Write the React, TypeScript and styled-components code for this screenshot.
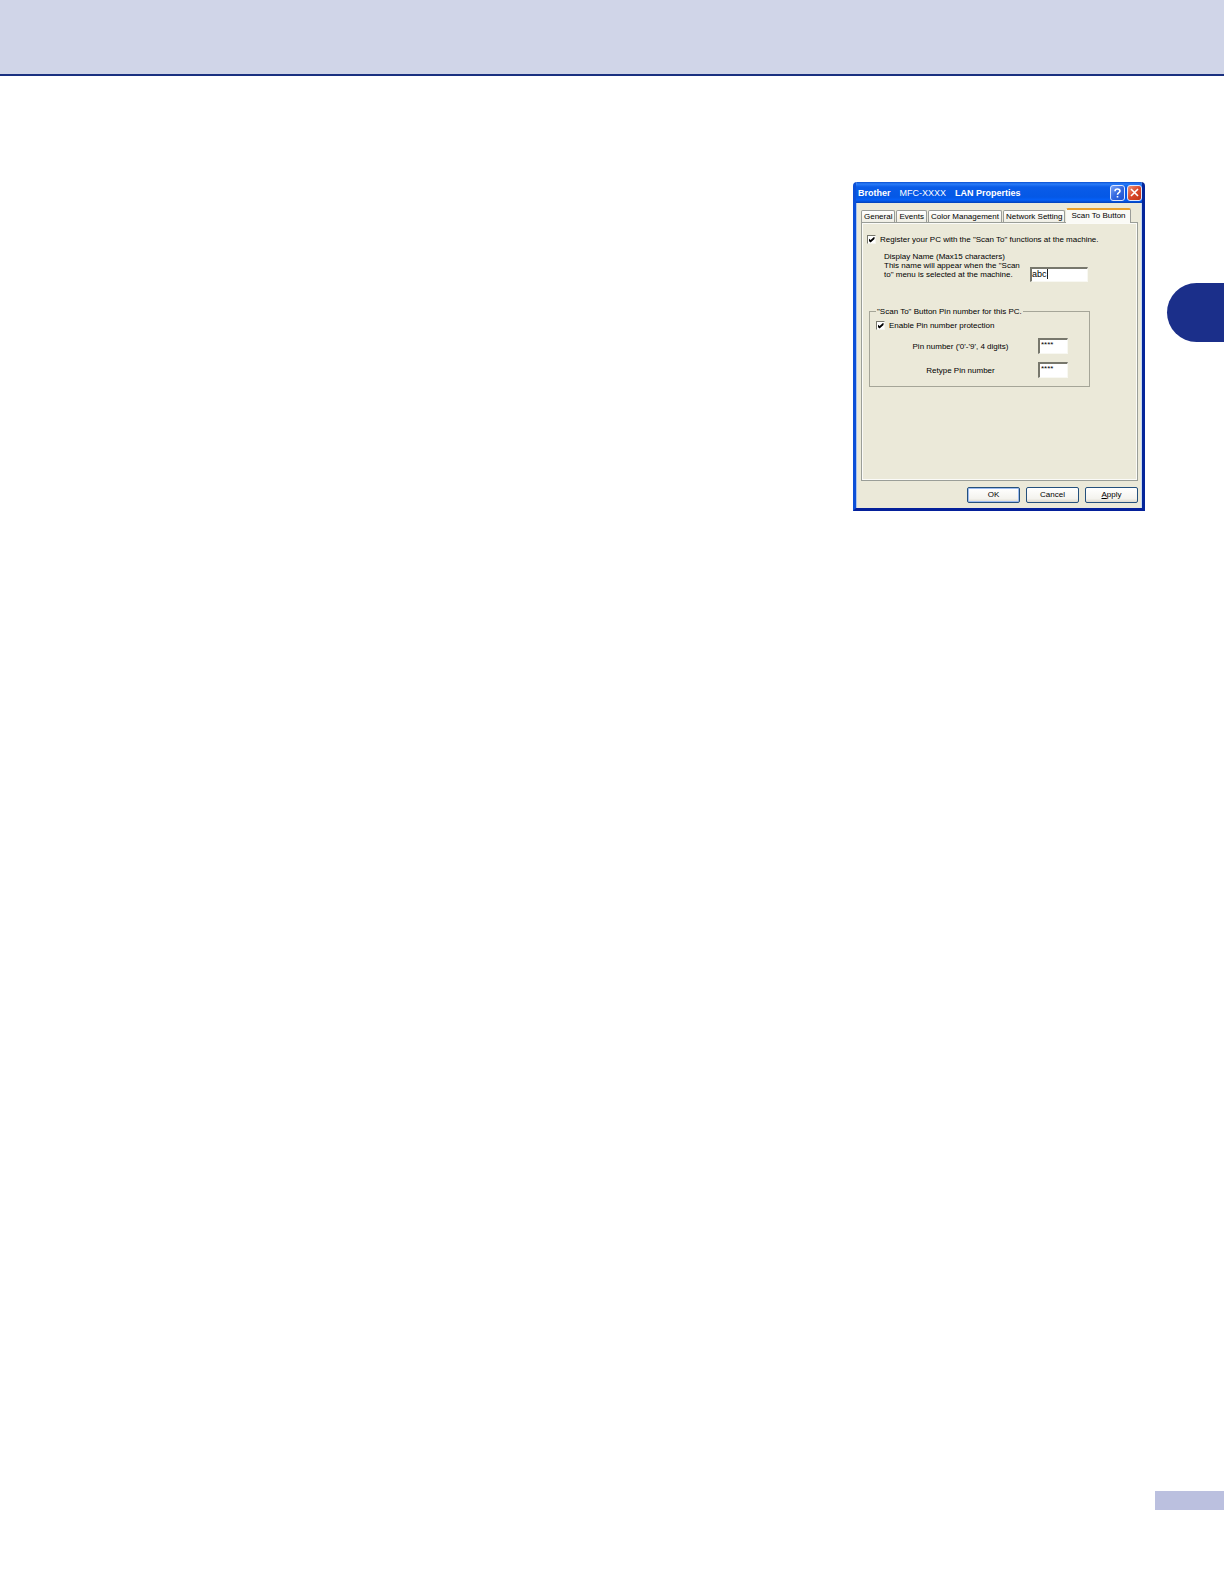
import React from "react";
import styled, { createGlobalStyle } from "styled-components";

const GlobalStyle = createGlobalStyle`
  *, *::before, *::after { box-sizing: border-box; }
  body { margin: 0; background: #fff; }
  button, input { font: inherit; color: inherit; margin: 0; }
`;

const Page = styled.div`
  display: flex;
  flex-direction: column;
  min-height: 100vh;
  font-family: "Liberation Sans", Arial, sans-serif;
`;

const Banner = styled.header`
  height: 76px;
  flex: none;
  background: #d0d5e8;
  border-bottom: 2px solid #1a3080;
`;

const Main = styled.main`
  flex: 1;
  display: flex;
  justify-content: flex-end;
  align-items: flex-start;
  gap: 22px;
  padding-top: 106px;
`;

const ChapterTab = styled.aside`
  width: 57px;
  height: 59px;
  margin-top: 101px;
  border-radius: 30px 0 0 30px;
  background: #1b2f8a;
`;

const PageMarker = styled.footer`
  align-self: flex-end;
  width: 69px;
  height: 19px;
  margin-bottom: 74px;
  background: #bbc0df;
`;

const Dialog = styled.section`
  width: 292px;
  border: solid;
  border-width: 0 3px 3px;
  border-color: #0831a8 #04269a #04209a #0c50d8;
  border-radius: 4px 4px 0 0;
  background: #ebe9d9;
  color: #000;
  font-size: 8px;
  line-height: 9px;
  overflow: hidden;
`;

const TitleBar = styled.header`
  display: flex;
  align-items: center;
  gap: 2px;
  height: 21px;
  margin: 0 -3px;
  padding: 0 3px 0 5px;
  background: linear-gradient(#0a50d0 0, #2a7cf8 2px, #0a5ce8 5px, #0458e6 15px, #0560f8 18px, #0340b8 21px);
  color: #fff;
`;

const Title = styled.h1`
  flex: 1;
  display: flex;
  gap: 9px;
  margin: 0;
  font-size: 9px;
  line-height: 12px;
  font-weight: bold;
  white-space: nowrap;
`;

const Model = styled.span`
  font-weight: normal;
`;

const CaptionButton = styled.button<{ $close?: boolean }>`
  display: grid;
  place-items: center;
  width: 15px;
  height: 16px;
  padding: 0;
  border: 1px solid #dfe8ff;
  border-radius: 3px;
  background: ${(p) =>
    p.$close
      ? "linear-gradient(135deg, #ee9478, #d9472a 50%, #c03414)"
      : "linear-gradient(135deg, #7aa4f8, #3468e0 50%, #1c50d0)"};
`;

const Body = styled.div`
  padding: 5px 4px 5px 5px;
  box-shadow: inset 1px 0 #a9c4ee, inset -1px 0 #c5daf2;
`;

const Tabs = styled.div`
  display: flex;
  align-items: flex-end;
  gap: 1px;
  height: 14px;
`;

const Tab = styled.button<{ $active?: boolean }>`
  height: ${(p) => (p.$active ? 15 : 12)}px;
  margin-bottom: ${(p) => (p.$active ? -1 : 0)}px;
  padding: ${(p) => (p.$active ? "0 4px 2px" : "0 2px")};
  border: 1px solid #9a9c98;
  border-top-color: ${(p) => (p.$active ? "#e8a02c" : "#9a9c98")};
  border-top-width: ${(p) => (p.$active ? 2 : 1)}px;
  border-bottom: 0;
  border-left-color: ${(p) => (p.$active ? "#f8f8f4" : "#9a9c98")};
  border-radius: 2px 2px 0 0;
  background: ${(p) => (p.$active ? "#fafaf6" : "linear-gradient(#fff, #efeee4)")};
  position: relative;
  line-height: 10px;
  white-space: nowrap;
`;

const Panel = styled.div`
  min-height: 259px;
  padding: 12px 6px 12px 5px;
  border: 1px solid #9a9e98;
  box-shadow: inset 1px 1px #fbfbf8, inset -1px -1px #fbfbf8;
`;

const CheckRow = styled.label`
  display: flex;
  align-items: center;
  gap: 4px;
  height: 9px;
  white-space: nowrap;
`;

const CheckBox = styled.input.attrs({ type: "checkbox" })`
  appearance: none;
  width: 9px;
  height: 9px;
  flex: none;
  border: 1px solid;
  border-color: #77776c #f5f5ee #f5f5ee #77776c;
  background: #fff;
  display: grid;
  place-items: center;
  &:checked::before {
    content: "";
    width: 6px;
    height: 6px;
    background: #000;
    clip-path: polygon(0 30%, 35% 60%, 100% 0, 100% 40%, 35% 100%, 0 70%);
  }
`;

const NameRow = styled.div`
  display: flex;
  align-items: flex-end;
  height: 30px;
  margin-top: 8px;
  padding-left: 17px;
`;

const NameLabel = styled.label`
  align-self: flex-start;
  width: 146px;
  white-space: nowrap;
`;

const TextBox = styled.input`
  width: 30px;
  height: 16px;
  padding: 0 1px 4px;
  border: solid;
  border-width: 2px 1px 1px 2px;
  border-color: #77776c #f8f8f2 #f8f8f2 #77776c;
  border-radius: 0;
  background: #fff;
  outline: 0;
`;

const NameField = styled.span`
  position: relative;
  display: flex;
`;

const NameBox = styled(TextBox)`
  width: 58px;
  height: 15px;
  padding: 0 0 2px;
  font-size: 9px;
`;

const Caret = styled.i`
  position: absolute;
  left: 17px;
  top: 2px;
  width: 1px;
  height: 10px;
  background: #222;
`;

const PinGroup = styled.fieldset`
  margin: 25px 41px 0 2px;
  padding: 5px 6px 8px;
  border: 1px solid #a5a598;
`;

const Legend = styled.legend`
  padding: 0 1px;
  white-space: nowrap;
`;

const PinRow = styled.div`
  display: flex;
  align-items: center;
  margin-top: 8px;
  padding-left: 7px;
`;

const PinLabel = styled.label`
  width: 155px;
  text-align: center;
`;

const Actions = styled.div`
  display: flex;
  justify-content: flex-end;
  gap: 6px;
  margin-top: 6px;
`;

const ActionButton = styled.button<{ $primary?: boolean }>`
  width: 53px;
  height: 16px;
  padding: 0;
  border: 1px solid #24507c;
  border-radius: 2px;
  background: linear-gradient(#fff, #f4f3ee 75%, #dedbd0);
  box-shadow: ${(p) => (p.$primary ? "inset 0 0 0 1px #9dbcf0" : "none")};
  line-height: 12px;
`;

const tabs = ["General", "Events", "Color Management", "Network Setting", "Scan To Button"];

export default function App() {
  return (
    <Page>
      <GlobalStyle />
      <Banner />
      <Main>
        <Dialog>
          <TitleBar>
            <Title>
              <span>Brother</span>
              <Model>MFC-XXXX</Model>
              <span>LAN Properties</span>
            </Title>
            <CaptionButton aria-label="Help">
              <svg width="9" height="10" viewBox="0 0 9 10" fill="none" stroke="#fff" strokeWidth="1.6">
                <path d="M2 3.2C2 .3 7 .3 7 3C7 4.7 4.5 4.6 4.5 6.7M4.5 8V9.6" />
              </svg>
            </CaptionButton>
            <CaptionButton $close aria-label="Close">
              <svg width="9" height="9" viewBox="0 0 9 9" stroke="#fff" strokeWidth="1.6">
                <path d="M1 1L8 8M8 1L1 8" />
              </svg>
            </CaptionButton>
          </TitleBar>
          <Body>
            <Tabs role="tablist">
              {tabs.map((name, i) => (
                <Tab key={name} role="tab" aria-selected={i === 4} $active={i === 4}>
                  {name}
                </Tab>
              ))}
            </Tabs>
            <Panel role="tabpanel">
              <CheckRow>
                <CheckBox defaultChecked />
                Register your PC with the "Scan To" functions at the machine.
              </CheckRow>
              <NameRow>
                <NameLabel htmlFor="display-name">
                  Display Name (Max15 characters)
                  <br />
                  This name will appear when the "Scan
                  <br />
                  to" menu is selected at the machine.
                </NameLabel>
                <NameField>
                  <NameBox id="display-name" defaultValue="abc" />
                  <Caret />
                </NameField>
              </NameRow>
              <PinGroup>
                <Legend>"Scan To" Button Pin number for this PC.</Legend>
                <CheckRow>
                  <CheckBox defaultChecked />
                  Enable Pin number protection
                </CheckRow>
                <PinRow>
                  <PinLabel htmlFor="pin">Pin number ('0'-'9', 4 digits)</PinLabel>
                  <TextBox id="pin" defaultValue="****" />
                </PinRow>
                <PinRow>
                  <PinLabel htmlFor="pin-again">Retype Pin number</PinLabel>
                  <TextBox id="pin-again" defaultValue="****" />
                </PinRow>
              </PinGroup>
            </Panel>
            <Actions>
              <ActionButton $primary>OK</ActionButton>
              <ActionButton>Cancel</ActionButton>
              <ActionButton>
                <u>A</u>pply
              </ActionButton>
            </Actions>
          </Body>
        </Dialog>
        <ChapterTab />
      </Main>
      <PageMarker />
    </Page>
  );
}
